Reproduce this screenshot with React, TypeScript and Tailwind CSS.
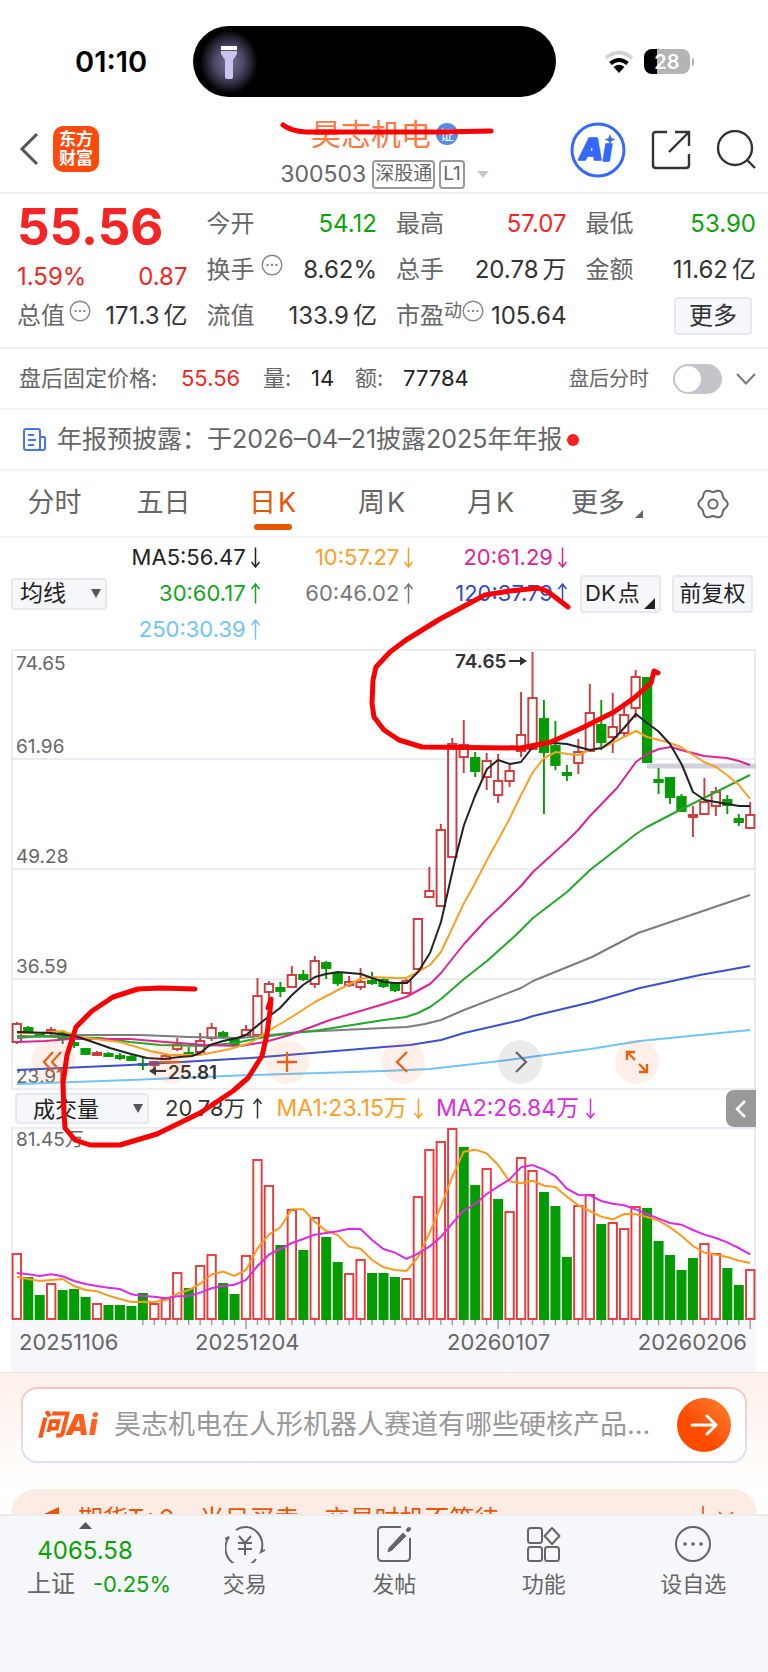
import React from "react";

type Candle = [up: boolean, high: number, top: number, bottom: number, low: number, volumeTop: number];

const R = true;
const G = false;

const candles: Candle[] = [
  [R, 1022, 1024, 1042, 1044, 1253], [G, 1026, 1028, 1032, 1033, 1277], [G, 1032, 1033, 1036, 1037, 1295],
  [R, 1027, 1030, 1032, 1036, 1283], [G, 1032, 1033, 1039, 1044, 1290], [G, 1040, 1043, 1045, 1048, 1289],
  [G, 1048, 1049, 1054, 1054, 1297], [R, 1051, 1053, 1055, 1056, 1303], [G, 1052, 1054, 1056, 1057, 1305],
  [G, 1053, 1056, 1058, 1060, 1305], [G, 1055, 1057, 1060, 1061, 1306], [G, 1057, 1064, 1065, 1070, 1293],
  [R, 1061, 1062, 1065, 1068, 1303], [R, 1054, 1056, 1059, 1060, 1298], [R, 1038, 1045, 1049, 1051, 1272],
  [G, 1047, 1053, 1054, 1055, 1288], [R, 1033, 1041, 1052, 1054, 1265], [R, 1023, 1028, 1038, 1041, 1254],
  [G, 1031, 1033, 1037, 1039, 1283], [G, 1038, 1039, 1044, 1045, 1294], [R, 1025, 1030, 1035, 1036, 1255],
  [R, 978, 996, 1035, 1036, 1159], [R, 981, 984, 992, 1003, 1185], [G, 982, 988, 991, 997, 1245],
  [R, 966, 975, 987, 987, 1209], [G, 970, 975, 979, 981, 1250], [R, 956, 961, 984, 988, 1217],
  [G, 961, 963, 968, 979, 1237], [G, 972, 974, 983, 986, 1262], [R, 976, 982, 985, 987, 1273],
  [R, 968, 982, 987, 990, 1259], [G, 972, 981, 983, 985, 1273], [G, 978, 980, 986, 988, 1273],
  [G, 983, 984, 990, 992, 1277], [R, 979, 981, 993, 994, 1278], [R, 919, 919, 969, 969, 1196],
  [R, 867, 891, 897, 897, 1149], [R, 824, 830, 906, 906, 1141], [R, 738, 744, 857, 857, 1128],
  [R, 720, 745, 757, 773, 1147], [G, 752, 758, 771, 777, 1185], [R, 753, 761, 777, 790, 1168],
  [R, 754, 781, 795, 803, 1199], [R, 765, 771, 781, 787, 1211], [R, 692, 735, 751, 757, 1157],
  [R, 652, 698, 749, 749, 1170], [G, 700, 719, 752, 814, 1192], [G, 721, 746, 765, 770, 1206],
  [G, 765, 773, 775, 781, 1257], [R, 739, 752, 763, 774, 1205], [R, 684, 713, 751, 751, 1194],
  [G, 700, 725, 742, 750, 1224], [R, 693, 727, 737, 753, 1222], [R, 707, 715, 733, 737, 1228],
  [R, 670, 677, 708, 718, 1206], [G, 677, 678, 762, 763, 1208], [G, 768, 780, 782, 794, 1241],
  [G, 778, 778, 797, 804, 1255], [G, 794, 797, 811, 812, 1270], [R, 806, 815, 817, 837, 1258],
  [R, 778, 802, 814, 814, 1243], [R, 787, 792, 806, 816, 1253], [G, 795, 800, 805, 814, 1268],
  [G, 814, 819, 822, 826, 1285], [R, 802, 815, 828, 829, 1269],
];

const candleX = (i: number) => 16.8 + i * 11.46;

const volumeGreen = new Set([
  1, 2, 4, 5, 6, 8, 9, 10, 11, 15, 18, 19, 23, 25, 27, 28, 31, 32, 33, 39, 40, 42, 46, 47, 48, 51, 55, 56, 57, 58, 59, 62, 63,
]);

const averages = [
  { color: "#70c4f8", points: "17,1084 130,1080 250,1075 384,1071 430,1069 500,1061 590,1049 640,1041 700,1035 750,1030" },
  { color: "#3a52cc", points: "17,1070 130,1065 250,1058 384,1047 410,1045 441,1040 464,1033 521,1020 533,1016 592,1002 640,988 700,975 750,966" },
  { color: "#7c7c7c", points: "17,1038 45,1036 80,1035 140,1035 190,1037 240,1038 300,1032 384,1028 407,1027 425,1024 441,1020 464,1010 521,988 533,981 592,957 638,933 700,912 750,895" },
  { color: "#23a82c", points: "17,1036 60,1037 100,1038 130,1042 160,1045 205,1046 235,1043 270,1036 320,1030 384,1020 406,1017 418,1013 430,1007 441,999 464,979 487,961 516,935 533,918 567,892 590,870 617,849 636,834 647,827 674,813 704,798 750,775" },
  { color: "#de2396", points: "17,1042 45,1041 70,1039 130,1039 165,1042 205,1045 240,1046 265,1042 290,1035 330,1020 384,1004 406,997 430,984 441,973 464,944 487,919 500,907 521,886 533,872 567,841 578,830 590,816 617,788 636,762 647,754 659,749 671,747 681,750 704,756 727,758 739,761 750,765" },
  { color: "#fba024", points: "17,1033 40,1033 63,1031 75,1036 86,1038 120,1042 150,1051 170,1055 200,1055 230,1049 250,1043 270,1030 290,1018 315,1002 340,989 360,979 372,977 395,978 406,978 418,972 430,965 441,952 464,903 472,889 487,860 498,840 510,818 521,795 533,772 544,758 556,752 567,754 578,755 590,750 604,747 636,731 647,737 667,742 681,747 704,762 716,767 727,775 739,785 750,799" },
  { color: "#222222", points: "17,1032 51,1033 75,1036 90,1041 110,1048 131,1054 147,1058 163,1059 180,1057 192,1056 200,1053 210,1045 223,1041 237,1038 246,1035 263,1021 280,1008 292,995 303,985 315,977 326,974 338,972 361,974 372,978 384,982 395,983 407,983 418,972 430,953 441,922 455,860 464,825 475,796 487,769 498,760 510,764 521,762 532,748 544,744 555,743 567,744 590,750 602,748 613,740 624,728 636,714 647,723 658,731 670,744 682,765 693,792 705,800 716,802 739,806 750,806" },
];

const volumeFast = [
  530, 537, 543, 540, 537, 558, 570, 574, 587, 597, 606, 605, 606, 600, 581, 570, 552, 523, 515, 528, 510, 445, 404, 382, 328, 328,
  365, 393, 405, 440, 446, 480, 502, 510, 513, 472, 400, 320, 230, 155, 149, 160, 195, 244, 250, 242, 257, 261, 290, 316, 333, 350,
  358, 342, 343, 351, 362, 382, 407, 438, 458, 464, 471, 482, 489,
];
const volumeSlow = [
  519, 523, 528, 523, 529, 543, 552, 558, 563, 567, 583, 588, 590, 595, 589, 588, 578, 565, 558, 554, 540, 498, 464, 447, 429, 417,
  404, 399, 394, 386, 387, 420, 447, 458, 477, 461, 440, 411, 370, 332, 312, 282, 260, 238, 202, 195, 209, 228, 266, 285, 286, 303,
  311, 316, 328, 342, 356, 369, 374, 390, 404, 414, 427, 444, 463,
];
const toPoints = (values: number[]) => values.map((v, i) => `${candleX(i)},${1100 + v / 3}`).join(" ");

const gearPath =
  Array.from({ length: 72 }, (_, i) => {
    const a = (i * Math.PI) / 36;
    const r = 13.4 + 1.3 * Math.cos(6 * a);
    return `${i ? "L" : "M"}${(16 + r * Math.cos(a)).toFixed(2)} ${(16 + r * Math.sin(a)).toFixed(2)}`;
  }).join("") + "Z";

function Dots() {
  return (
    <svg className="size-[22px] shrink-0" viewBox="0 0 22 22" fill="none" stroke="#888" strokeWidth="1.4">
      <circle cx="11" cy="11" r="9.8" />
      <path d="M5.6 11h2M10 11h2M14.4 11h2" strokeWidth="2" />
    </svg>
  );
}

function Trend({ up }: { up?: boolean }) {
  return (
    <svg className="h-[21px] w-[11px]" viewBox="0 0 11 21" fill="none" stroke="currentColor" strokeWidth="1.5">
      {up ? <path d="M5.5 20.5V1M1.5 6l4-5 4 5" /> : <path d="M5.5.5V20M1.5 15l4 5 4-5" />}
    </svg>
  );
}

type StatProps = { label: string; value: string; unit?: string; tone?: string; mark?: React.ReactNode };

function Stat({ label, value, unit, tone = "text-[#333]", mark }: StatProps) {
  return (
    <div className="flex h-[46px] items-center justify-between whitespace-nowrap">
      <span className="flex items-center text-[#666]">
        {label}
        {mark && <span className="flex items-center pb-2.5 text-[18px] leading-[22px]">{mark}</span>}
      </span>
      <span className={`flex gap-1 ${tone}`}>
        {value}
        {unit && <span>{unit}</span>}
      </span>
    </div>
  );
}

function Average({ text, up, tone }: { text: string; up?: boolean; tone: string }) {
  return (
    <div className={`flex h-9 items-center justify-end gap-1 ${tone}`}>
      {text}
      <Trend up={up} />
    </div>
  );
}

function StatusBar() {
  return (
    <div className="flex h-[105px] items-center justify-between pt-[18px] pr-[74px] pl-[75px]">
      <span className="w-[118px] text-[29px] font-semibold text-black">01:10</span>
      <div className="flex h-[71px] w-[363px] items-center rounded-full bg-black">
        <svg className="h-[69px] w-[70px]" viewBox="0 0 70 69">
          <defs>
            <radialGradient id="torch">
              <stop offset="0" stopColor="#77739a" />
              <stop offset=".5" stopColor="#4b4864" />
              <stop offset="1" stopColor="#000" />
            </radialGradient>
          </defs>
          <ellipse cx="36" cy="35" rx="29" ry="32" fill="url(#torch)" />
          <path d="M28 19h16v4H28z" fill="#fff" />
          <path d="M28 24h16v3l-4 6v17q0 2-2 2h-4q-2 0-2-2V33l-4-6z" fill="#c9c4ee" />
        </svg>
      </div>
      <div className="flex w-[138px] items-center justify-end gap-2.5">
        <svg className="h-[23px] w-[30px]" viewBox="0 0 30 23" fill="none" strokeWidth="4">
          <path d="M2 8Q15-3 28 8" stroke="#d2d2d2" />
          <path d="M6.5 13.5q8.500-7 17 0" stroke="#000" />
          <path d="M9.500 17q5.500-4.500 11 0L15 23z" fill="#000" />
        </svg>
        <div className="flex items-center gap-0.5">
          <div className="flex h-[25px] w-[46px] items-center justify-center rounded-lg bg-linear-to-r from-black from-28% to-[#b4b4b4] to-28% text-[20px] font-semibold text-white">
            28
          </div>
          <div className="h-2 w-0.5 rounded-r bg-[#b4b4b4]" />
        </div>
      </div>
    </div>
  );
}

function Header() {
  return (
    <header className="flex h-[89px] items-start justify-between border-b-2 border-[#eeeff1] pr-3 pl-[19px]">
      <div className="flex w-[180px] items-center gap-3.5 pt-[21px]">
        <button aria-label="返回">
          <svg className="h-[34px] w-5" viewBox="0 0 20 34" fill="none" stroke="#555" strokeWidth="3">
            <path d="M18 2 3 17l15 15" />
          </svg>
        </button>
        <div className="flex size-[46px] flex-col items-center justify-center rounded-[10px] bg-[#ff4a0b] text-[17px] leading-[19px] font-bold text-white">
          <span>东方</span>
          <span>财富</span>
        </div>
      </div>
      <div className="flex flex-col items-center pt-2">
        <div className="flex h-[42px] items-center gap-[5px] text-[30px] text-[#f97a45]">
          昊志机电
          <span className="flex size-[22px] items-center justify-center rounded-full bg-[#568bea] text-[14px] text-white">证</span>
        </div>
        <div className="flex h-[38px] items-center text-[23px] text-[#666]">
          300503
          <span className="ml-1.5 flex h-[29px] items-center rounded border-2 border-[#999] px-px text-[19px]">深股通</span>
          <span className="ml-1 flex h-[29px] items-center rounded border-2 border-[#999] px-0.5 text-[19px]">L1</span>
          <svg className="ml-3 h-[7px] w-3" viewBox="0 0 12 7">
            <path d="M0 0h12L6 7z" fill="#c8c8c8" />
          </svg>
        </div>
      </div>
      <div className="flex w-[186px] items-center justify-between pt-[17px]">
        <button aria-label="AI 助手">
          <svg className="size-14" viewBox="0 0 56 56" fill="none">
            <circle cx="28" cy="28" r="26" stroke="#3568ff" strokeWidth="3" />
            <g fill="#3568ff" stroke="#3568ff" strokeLinejoin="round" fontSize="30" fontWeight="900" fontStyle="italic">
              <text x="9" y="38" strokeWidth="1.500">A</text>
              <text x="33" y="39" strokeWidth="1.500">ı</text>
            </g>
            <path d="m40 12 1.500 4 4 1.500-4 1.500-1.500 4-1.500-4-4-1.500 4-1.500z" fill="#3568ff" />
          </svg>
        </button>
        <button aria-label="分享">
          <svg className="size-10" viewBox="0 0 40 40" fill="none" stroke="#333" strokeWidth="2.400">
            <path d="M16 2H5Q2 2 2 5v30q0 3 3 3h30q3 0 3-3V24M24 2h14v14M38 2 18 22" />
          </svg>
        </button>
        <button aria-label="搜索">
          <svg className="size-10" viewBox="0 0 40 40" fill="none" stroke="#333" strokeWidth="2.400">
            <circle cx="19" cy="18" r="17" />
            <path d="m31 30 8 8" />
          </svg>
        </button>
      </div>
    </header>
  );
}

function Quote() {
  return (
    <section className="grid h-[155px] grid-cols-4 gap-x-[19px] border-b-2 border-[#eeeff1] pt-[7px] pr-3 pl-[17px] text-[24px]">
      <div className="whitespace-nowrap">
        <div className="flex h-[52px] items-center text-[51px] font-bold text-[#f52525]">55.56</div>
        <div className="flex h-12 items-center justify-between text-[#f52525]">
          <span>1.59%</span>
          <span>0.87</span>
        </div>
        <div className="flex h-[30px] items-center justify-between text-[#333]">
          <span className="flex items-center text-[#666]">
            总值
            <span className="ml-1 pb-2.5"><Dots /></span>
          </span>
          <span className="flex gap-1">171.3<span>亿</span></span>
        </div>
      </div>
      <div>
        <Stat label="今开" value="54.12" tone="text-[#08a408]" />
        <Stat label="换手" value="8.62%" mark={<span className="ml-1.5"><Dots /></span>} />
        <Stat label="流值" value="133.9" unit="亿" />
      </div>
      <div>
        <Stat label="最高" value="57.07" tone="text-[#f52525]" />
        <Stat label="总手" value="20.78" unit="万" />
        <Stat label="市盈" value="105.64" mark={<>动<Dots /></>} />
      </div>
      <div>
        <Stat label="最低" value="53.90" tone="text-[#08a408]" />
        <Stat label="金额" value="11.62" unit="亿" />
        <div className="flex h-[46px] items-center justify-end pr-1">
          <button className="h-[38px] w-[78px] rounded border-2 border-[#e6e8ec] bg-[#f6f7fa] text-[24px] leading-8 text-[#333]">更多</button>
        </div>
      </div>
    </section>
  );
}

function AfterHours() {
  return (
    <section className="flex h-[61px] items-center border-b-2 border-[#f4f4f6] pr-3 pl-[19px] text-[22px] whitespace-nowrap text-[#666]">
      <span className="w-[162px]">盘后固定价格:</span>
      <span className="w-[82px] text-[#f52525]">55.56</span>
      <span className="w-12">量:</span>
      <span className="w-11 text-[#222]">14</span>
      <span className="w-12">额:</span>
      <span className="text-[#222]">77784</span>
      <label htmlFor="after" className="ml-auto text-[20px]">盘后分时</label>
      <span className="relative ml-6 flex">
        <input
          id="after"
          type="checkbox"
          role="switch"
          className="peer h-[30px] w-[49px] appearance-none rounded-full bg-[#c3c5cb] checked:bg-[#ea5504]"
        />
        <span className="pointer-events-none absolute top-0.5 left-0.5 size-[26px] rounded-full bg-white peer-checked:left-[21px]" />
      </span>
      <button aria-label="展开" className="ml-3.5">
        <svg className="h-3 w-5" viewBox="0 0 20 12" fill="none" stroke="#777" strokeWidth="2">
          <path d="m1 1 9 9.500L19 1" />
        </svg>
      </button>
    </section>
  );
}

function Notice() {
  return (
    <a href="#notice" className="flex h-[61px] items-center border-b-2 border-[#f4f4f6] pl-[23px] text-[25px] whitespace-nowrap text-[#666]">
      <svg className="mr-[11px] h-6 w-[23px]" viewBox="0 0 23 24" fill="none" stroke="#4675f0" strokeWidth="2">
        <path d="M17 22V3q0-2-2-2H3Q1 1 1 3v17q0 2 2 2h17q2 0 2-2V10q0-1-1-1h-4M5 7h6M5 12h8M5 17h6" />
      </svg>
      年报预披露：于2026–04–21披露2025年年报
      <span className="ml-1 size-3 rounded-full bg-[#fa1f1f]" />
    </a>
  );
}

const tabs = ["分时", "五日", "日K", "周K", "月K"];

function Tabs() {
  return (
    <nav className="flex h-[67px] items-center border-b-2 border-[#f4f4f6] text-[27px] text-[#666]">
      {tabs.map((t) => (
        <button key={t} className={`relative flex h-full w-[109px] items-center justify-center ${t === "日K" ? "text-[#ea5504]" : ""}`}>
          {t[0]}
          <span className={t[1] === "K" ? "ml-0.5" : ""}>{t[1]}</span>
          {t === "日K" && <span className="absolute bottom-1.5 h-1.5 w-[38px] rounded-full bg-[#ea5504]" />}
        </button>
      ))}
      <button className="flex h-full w-[124px] items-center justify-center gap-2.5">
        更多
        <svg className="mt-5 size-2" viewBox="0 0 8 8">
          <path d="M8 0v8H0z" fill="#666" />
        </svg>
      </button>
      <button aria-label="设置" className="ml-auto pr-[39px]">
        <svg className="size-8" viewBox="0 0 32 32" fill="none" stroke="#666" strokeWidth="2">
          <path d={gearPath} />
          <circle cx="16" cy="16" r="4.600" />
        </svg>
      </button>
    </nav>
  );
}

function Picker({ label, value, className }: { label: string; value: string; className: string }) {
  return (
    <span className={`relative flex shrink-0 items-center ${className}`}>
      <select aria-label={label} className="size-full appearance-none rounded border-2 border-[#e6e8ec] bg-[#f6f7fa] pr-8 text-center leading-none text-[#222] [text-align-last:center]">
        <option>{value}</option>
      </select>
      <svg className="pointer-events-none absolute right-1.5 h-[9px] w-2.5" viewBox="0 0 10 9">
        <path d="M0 0h10L5 9z" fill="#555" />
      </svg>
    </span>
  );
}

function Legend() {
  return (
    <section className="flex h-[111px] items-center pr-[15px] pl-[11px] text-[22px] whitespace-nowrap">
      <Picker label="指标" value="均线" className="h-8 w-[96px] text-[23px]" />
      <div className="grid flex-1 grid-cols-3">
        <Average text="MA5:56.47" tone="text-[#222]" />
        <Average text="10:57.27" tone="text-[#fba024]" />
        <Average text="20:61.29" tone="text-[#de2396]" />
        <Average text="30:60.17" up tone="text-[#14a51c]" />
        <Average text="60:46.02" up tone="text-[#777]" />
        <Average text="120:37.79" up tone="text-[#3048cc]" />
        <Average text="250:30.39" up tone="text-[#70c4f8]" />
      </div>
      <button className="relative ml-3 h-[38px] w-[81px] rounded border-2 border-[#e6e8ec] bg-[#f6f7fa] pl-[3px] text-left text-[#222]">
        DK<span className="ml-0.5">点</span>
        <svg className="absolute right-1 bottom-0.5 size-[11px]" viewBox="0 0 11 11">
          <path d="M11 0v11H0z" fill="#222" />
        </svg>
      </button>
      <button className="ml-[11px] h-[38px] w-[81px] rounded border-2 border-[#e6e8ec] bg-[#f6f7fa] text-[#222]">前复权</button>
    </section>
  );
}

const tools = [
  { name: "最早", d: "M22 12 13 22l9 10M30 12l-9 10 9 10" },
  { name: "缩小", d: "M12 22h20" },
  { name: "放大", d: "M12 22h20M22 12v20" },
  { name: "向左", d: "M26 12 16 22l10 10" },
  { name: "向右", d: "M18 12l10 10-10 10", muted: true },
  { name: "全屏", d: "M12 20v-8h8M12 12l8 8M32 24v8h-8M32 32l-8-8" },
];

function PriceChart() {
  return (
    <div className="relative mr-3 ml-[11px]">
      <svg className="block w-full" viewBox="11 649 745 441" fill="none" strokeWidth="1.900">
        <path d="M12 650h743v439H12zM12 759h743M12 869h743M12 979h743" stroke="#e6e7ee" strokeWidth="1.600" />
        <g fontSize="19" fill="#666">
          <text x="16" y="670">74.65</text>
          <text x="16" y="753">61.96</text>
          <text x="16" y="863">49.28</text>
          <text x="16" y="973">36.59</text>
          <text x="16" y="1083">23.91</text>
        </g>
        <path d="M647 766h109" stroke="#d0d1da" strokeWidth="5" />
        {candles.map(([up, high, top, bottom, low], i) => {
          const x = candleX(i);
          const color = up ? "#cf3a3c" : "#049c04";
          const solid = !up || bottom - top < 3;
          return (
            <g key={i} stroke={color}>
              <path d={`M${x} ${high}V${top}M${x} ${bottom}V${low}`} />
              <rect x={x - 4.2} y={top} width="8.400" height={Math.max(bottom - top, 1)} fill={solid ? color : "none"} />
            </g>
          );
        })}
        {averages.map((a) => (
          <polyline key={a.color} points={a.points} stroke={a.color} strokeLinejoin="round" strokeWidth="2" />
        ))}
        <g fontSize="19" fontWeight="600" fill="#333" stroke="none">
          <text x="455" y="668">74.65</text>
          <text x="168" y="1079">25.81</text>
        </g>
        <path d="M509 661h16M151 1071h15" stroke="#333" />
        <path d="m520 656.500 7 4.500-7 4.500zM156 1066.500l-7 4.500 7 4.500z" fill="#333" />
      </svg>
      <div className="absolute right-[97px] bottom-1.5 left-5 flex justify-between">
        {tools.map((t) => (
          <button key={t.name} aria-label={t.name} className={`size-11 rounded-full ${t.muted ? "bg-black/8 text-[#666]" : "bg-[#f26a2a]/10 text-[#ee5f16]"}`}>
            <svg viewBox="0 0 44 44" fill="none" stroke="currentColor" strokeWidth="2.300">
              <path d={t.d} />
            </svg>
          </button>
        ))}
      </div>
    </div>
  );
}

function VolumeChart() {
  return (
    <div className="mr-3 ml-[11px]">
      <div className="flex h-[37px] items-center pl-1 text-[22px] whitespace-nowrap text-[#333]">
        <Picker label="副图" value="成交量" className="h-[31px] w-[134px]" />
        <span className="ml-4 flex items-center gap-1.5">20.78万<Trend up /></span>
        <span className="ml-3.5 flex items-center gap-1.5 text-[23px] text-[#fba024]">MA1:23.15万<Trend /></span>
        <span className="ml-3 flex items-center gap-1.5 text-[23px] text-[#d92be0]">MA2:26.84万<Trend /></span>
        <button aria-label="收起" className="ml-auto flex h-full w-[30px] items-center justify-center rounded-l-lg bg-[#999]">
          <svg className="h-[18px] w-3" viewBox="0 0 12 18" fill="none" stroke="#fff" strokeWidth="2.500">
            <path d="M10 1 2 9l8 8" />
          </svg>
        </button>
      </div>
      <svg className="block w-full bg-[#f6f7fa]" viewBox="11 1127 745 245" fill="none">
        <path d="M12 1128h743v191H12z" fill="#fff" stroke="#e6e7ee" strokeWidth="1.600" />
        <path d="M11 1319.500h745v2H11z" fill="#f6f7fa" />
        <text x="16" y="1146" fontSize="19" fill="#666">81.45万</text>
        {candles.map(([, , , , , top], i) => {
          const x = candleX(i);
          return volumeGreen.has(i) ? (
            <rect key={i} x={x - 5} y={top} width="10" height={1320 - top} fill="#049c04" />
          ) : (
            <rect key={i} x={x - 4.2} y={top + 1} width="8.400" height={1318 - top} fill="#fff" stroke="#ea3a3c" strokeWidth="1.900" />
          );
        })}
        {candles.map((_, i) => i > 10 && <path key={i} d={`M${candleX(i)} 1320v${i === 20 || i === 42 || i === 64 ? 9 : 5}`} stroke="#999" strokeWidth="1.400" />)}
        <polyline points={toPoints(volumeFast)} stroke="#fb9a1c" strokeWidth="2" />
        <polyline points={toPoints(volumeSlow)} stroke="#dc2be2" strokeWidth="2" />
        <g fontSize="22" fill="#666">
          <text x="19" y="1350">20251106</text>
          <text x="195" y="1350">20251204</text>
          <text x="447" y="1350">20260107</text>
          <text x="747" y="1350" textAnchor="end">20260206</text>
        </g>
      </svg>
    </div>
  );
}

function AskBar() {
  return (
    <section className="border-t border-[#e6e7ee] bg-linear-to-b from-[#fff0ea] to-white px-[21px] pt-3.5 pb-[26px]">
      <form className="rounded-2xl bg-linear-to-b from-[#fac4bb] to-[#dce2f5] p-0.5" onSubmit={(e) => e.preventDefault()}>
        <div className="flex h-[72px] items-center rounded-[14px] bg-white px-3.5">
          <label htmlFor="ask" className="w-[77px] bg-linear-to-r from-[#ff4d08] to-[#ff6a28] bg-clip-text text-[29px] font-black text-transparent italic">问Ai</label>
          <input id="ask" placeholder="昊志机电在人形机器人赛道有哪些硬核产品..." className="min-w-0 flex-1 text-[27px] outline-none placeholder:text-[#999]" />
          <button aria-label="发送" className="flex size-[54px] items-center justify-center rounded-full bg-linear-to-bl from-[#ff812d] to-[#ff4b00] to-60%">
            <svg className="h-6 w-7" viewBox="0 0 28 24" fill="none" stroke="#fff" strokeWidth="3" strokeLinecap="round" strokeLinejoin="round">
              <path d="M2 12h24M17 3l9 9-9 9" />
            </svg>
          </button>
        </div>
      </form>
    </section>
  );
}

function Banner() {
  return (
    <div className="mx-[11px] flex h-[25px] items-start overflow-hidden rounded-t-[28px] bg-[#fdece3] pr-5 pl-7 text-[25px] leading-[60px] whitespace-nowrap text-[#ea5504]">
      <svg className="mt-[18px] h-6 w-5 shrink-0" viewBox="0 0 20 24" fill="currentColor">
        <path d="M20 0v24H3q-3 0-3-4v-6q0-4 3-6z" />
      </svg>
      <span className="ml-[19px]">期货T+0，当日买卖，交易时机不等待</span>
      <svg className="mt-[17px] ml-auto h-6 w-9 shrink-0" viewBox="0 0 36 24" fill="none" stroke="currentColor" strokeWidth="1.600">
        <path d="M2 0v24M18 6l14 14M32 6 18 20" />
      </svg>
    </div>
  );
}

const actions = [
  {
    name: "交易",
    icon: (
      <>
        <path d="M11 7a17 18 0 0 1 25 22l4-2M31 36A17 18 0 0 1 4 14l-4 2" />
        <path d="m14 13 6 7 6-7M13 20h14M13 26h14M20 20v12" />
      </>
    ),
  },
  {
    name: "发帖",
    icon: (
      <>
        <path d="M27 4H8Q4 4 4 8v26q0 4 4 4h24q4 0 4-4V15" />
        <path d="m35 6-1 1" strokeWidth="4" strokeLinecap="round" />
        <path d="M29 10 15 25l-1 4 4-2 14-14z" fill="currentColor" strokeWidth="1" />
      </>
    ),
  },
  {
    name: "功能",
    icon: (
      <>
        <rect x="4" y="5" width="14" height="15" rx="2.500" />
        <rect x="4" y="24" width="14" height="14" rx="2.500" />
        <rect x="21" y="24" width="14" height="14" rx="2.500" />
        <path d="m28 5 7.500 8L28 21l-7.500-8z" strokeLinejoin="round" />
      </>
    ),
  },
  {
    name: "设自选",
    icon: (
      <>
        <circle cx="20" cy="21" r="17" />
        <path d="M12 21h.1M20 21h.1M28 21h.1" strokeWidth="3.600" strokeLinecap="round" />
      </>
    ),
  },
];

function BottomNav() {
  return (
    <nav className="flex flex-1 items-start border-t-2 border-[#ebecef] bg-[#f6f7fa] pb-[68px] text-[22px] whitespace-nowrap text-[#666]">
      <a href="#index" className="flex w-[170px] flex-col items-center pt-1.5 text-[#08a408]">
        <svg className="h-[7px] w-[13px]" viewBox="0 0 13 7">
          <path d="m6.500 0 6.500 7H0z" fill="#555" />
        </svg>
        <span className="flex h-[43px] items-center text-[24px]">4065.58</span>
        <span className="-mt-1 flex h-8 items-center gap-[18px] pl-7">
          <span className="text-[24px] text-[#666]">上证</span>-0.25%
        </span>
      </a>
      <div className="flex flex-1">
        {actions.map((a) => (
          <button key={a.name} className="flex flex-1 flex-col items-center pt-[7px]">
            <svg className="size-10" viewBox="0 0 40 40" fill="none" stroke="currentColor" strokeWidth="2">
              {a.icon}
            </svg>
            <span className="mt-[5px] flex h-8 items-center">{a.name}</span>
          </button>
        ))}
      </div>
    </nav>
  );
}

function Marks() {
  return (
    <svg
      className="pointer-events-none absolute top-0 left-0 w-full"
      viewBox="0 0 768 1672"
      fill="none"
      stroke="#fb0000"
      strokeWidth="5"
      strokeLinecap="round"
      strokeLinejoin="round"
    >
      <path d="M283 125q8 6 23 7h134l51-1" />
      <path d="M568 607 547 591l-9-3-28 3-25 4-45 24-34 21-16 12-14 15-3 13-1 23 2 14 10 13 15 10 23 7 99 1 30-6 33-15 30-15 20-14 17-15 3-12 4 2" />
      <path d="M195 989 160 988l-22 1-25 8-21 14-16 16-9 28-4 28 1 30 1 15 10 12 15 5h30l37-11 43-21 33-22 15-13 14-22 5-22 3-23 1-12-3 9" />
    </svg>
  );
}

export default function App() {
  return (
    <div className="relative flex min-h-screen flex-col overflow-hidden bg-white font-['Inter','Noto_Sans_CJK_SC',sans-serif]">
      <StatusBar />
      <Header />
      <Quote />
      <AfterHours />
      <Notice />
      <Tabs />
      <Legend />
      <PriceChart />
      <VolumeChart />
      <AskBar />
      <Banner />
      <BottomNav />
      <Marks />
    </div>
  );
}
